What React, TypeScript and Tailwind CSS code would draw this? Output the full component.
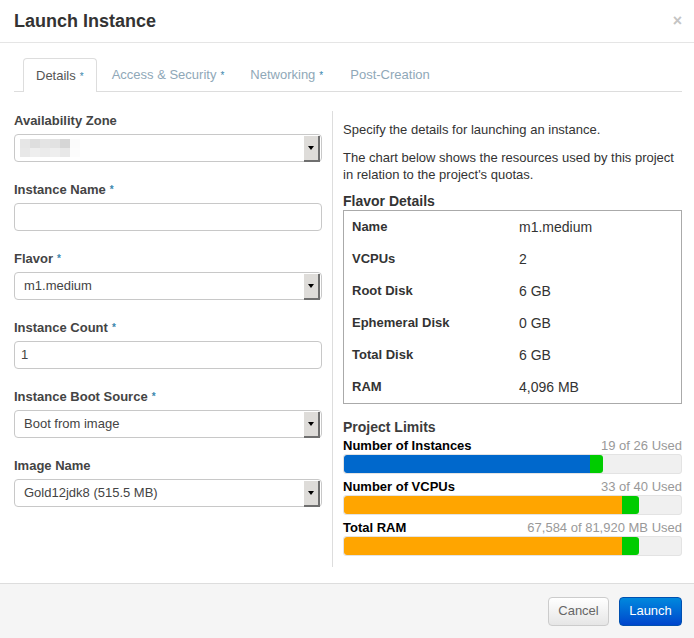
import React from "react";

const font = { fontFamily: '"Liberation Sans", Arial, sans-serif' };

function Req() {
  return <span className="ml-[4px] align-top text-[10px] text-[#3a87ad]">*</span>;
}

function SelectArrow() {
  return (
    <div className="absolute right-[1px] top-[1px] flex h-[26px] w-[16px] items-center justify-center border-r-2 border-b-2 border-[#6f6f6f] bg-[#dedcd9]">
      <div className="h-0 w-0 border-x-[3px] border-t-[4px] border-x-transparent border-t-black" />
    </div>
  );
}

function Field({
  label,
  required,
  children,
}: {
  label: string;
  required?: boolean;
  children: React.ReactNode;
}) {
  return (
    <div className="mb-[18px]">
      <div className="mb-[4px] h-[19px] text-[13px] font-bold leading-[19px] text-[#444]">
        {label}
        {required && <Req />}
      </div>
      {children}
    </div>
  );
}

function Select({ value }: { value?: React.ReactNode }) {
  return (
    <div className="relative h-[28px] w-full rounded-[4px] border border-[#c8c8c8] bg-white px-[9px] text-[13px] leading-[26px] text-[#444]">
      {value}
      <SelectArrow />
    </div>
  );
}

function Input({ value }: { value?: string }) {
  return (
    <div className="h-[28px] w-full rounded-[4px] border border-[#c8c8c8] bg-white px-[6px] text-[13px] leading-[26px] text-[#444]">
      {value}
    </div>
  );
}

// availability zone name is pixelated in the screenshot
function Blurred() {
  const rows = [
    ["#e6e6e6", "#dedede", "#e4e4e4", "#e2e2e2", "#d6d6d6", "#fbfbfb"],
    ["#e8e8e8", "#eeeeee", "#ebebeb", "#eeeeee", "#e8e8e8", "#fcfcfc"],
  ];
  return (
    <div className="-ml-[4px] mt-[4px] flex flex-col">
      {rows.map((r, i) => (
        <div key={i} className="flex">
          {r.map((c, j) => (
            <div key={j} className="h-[9px] w-[10px]" style={{ background: c }} />
          ))}
        </div>
      ))}
    </div>
  );
}

const flavor = [
  ["Name", "m1.medium"],
  ["VCPUs", "2"],
  ["Root Disk", "6 GB"],
  ["Ephemeral Disk", "0 GB"],
  ["Total Disk", "6 GB"],
  ["RAM", "4,096 MB"],
];

const limits = [
  { label: "Number of Instances", used: "19 of 26 Used", pct: 19 / 26, add: 1 / 26, color: "bg-[#0068cc]" },
  { label: "Number of VCPUs", used: "33 of 40 Used", pct: 33 / 40, add: 2 / 40, color: "bg-[#ffa500]" },
  { label: "Total RAM", used: "67,584 of 81,920 MB Used", pct: 67584 / 81920, add: 4096 / 81920, color: "bg-[#ffa500]" },
];

export default function App() {
  return (
    <div className="h-[638px] w-[694px] overflow-hidden bg-white text-[#333]" style={font}>
      <header className="flex h-[43px] items-center justify-between border-b border-[#e5e5e5] pl-[14px] pr-[12px]">
        <h1 className="text-[18px] font-bold text-[#333]">Launch Instance</h1>
        <span className="text-[16px] font-bold text-[#c4c4c4]">×</span>
      </header>

      <div className="h-[540px] pl-[14px] pr-[12px] pt-[15px]">
        <div className="flex h-[34px] border-b border-[#ddd] pl-[9px] text-[13px]">
          <div className="-mb-px mr-[2px] flex h-[34px] items-center rounded-t-[4px] border border-b-0 border-[#ddd] bg-white px-[12px] pt-[1px] text-[#555]">
            Details
            <Req />
          </div>
          <div className="flex items-center px-[13px] pt-[1px] text-[#8fa8b8]">
            Access &amp; Security
            <Req />
          </div>
          <div className="flex items-center px-[13px] pt-[1px] text-[#8fa8b8]">
            Networking
            <Req />
          </div>
          <div className="flex items-center px-[14px] pt-[1px] text-[#8fa8b8]">Post-Creation</div>
        </div>

        <div className="mt-[19px] flex">
          <div className="w-[308px] shrink-0">
            <Field label="Availability Zone">
              <Select value={<Blurred />} />
            </Field>
            <Field label="Instance Name" required>
              <Input />
            </Field>
            <Field label="Flavor" required>
              <Select value="m1.medium" />
            </Field>
            <Field label="Instance Count" required>
              <Input value="1" />
            </Field>
            <Field label="Instance Boot Source" required>
              <Select value="Boot from image" />
            </Field>
            <Field label="Image Name">
              <Select value="Gold12jdk8 (515.5 MB)" />
            </Field>
          </div>

          <div className="ml-[10px] h-[456px] w-px bg-[#ddd]" />

          <div className="ml-[10px] flex-1 pt-[10px] text-[13px]">
            <p className="leading-[18px]">Specify the details for launching an instance.</p>
            <p className="mt-[10px] leading-[17px]">
              The chart below shows the resources used by this project in relation to the project's quotas.
            </p>
            <h3 className="mt-[9px] text-[14px] font-bold leading-[18px]">Flavor Details</h3>
            <div className="border border-[#aaa] px-[8px]">
              {flavor.map(([k, v]) => (
                <div key={k} className="flex h-[32px] items-center">
                  <div className="w-[167px] text-[13px] font-bold text-[#333]">{k}</div>
                  <div className="text-[14px] text-[#333]">{v}</div>
                </div>
              ))}
            </div>
            <h3 className="mb-[2px] mt-[14px] text-[14px] font-bold leading-[18px] text-[#3c3c3c]">
              Project Limits
            </h3>
            {limits.map((l) => (
              <div key={l.label} className="mb-[5px]">
                <div className="flex h-[16px] items-center justify-between text-[13px] leading-[16px]">
                  <span className="font-bold text-black">{l.label}</span>
                  <span className="text-[#999]">{l.used}</span>
                </div>
                <div className="flex h-[20px] overflow-hidden rounded-[3px] border border-[#e3e3e3] bg-[#f0f0f0]">
                  <div className={`${l.color} rounded-l-[3px]`} style={{ width: `${l.pct * 100}%` }} />
                  <div className="rounded-r-[3px] bg-[#00cc00]" style={{ width: `${l.add * 100}%` }} />
                </div>
              </div>
            ))}
          </div>
        </div>
      </div>

      <footer className="flex h-[55px] items-center justify-end gap-[10px] border-t border-[#ddd] bg-[#f5f5f5] pr-[12px]">
        <button className="h-[29px] w-[61px] rounded-[4px] border border-[#ccc] bg-gradient-to-b from-white to-[#e6e6e6] text-[13px] text-[#666]">
          Cancel
        </button>
        <button className="h-[29px] w-[63px] rounded-[4px] border border-[#0050b0] bg-gradient-to-b from-[#0088dd] to-[#0044cc] text-[13px] text-white">
          Launch
        </button>
      </footer>
    </div>
  );
}
